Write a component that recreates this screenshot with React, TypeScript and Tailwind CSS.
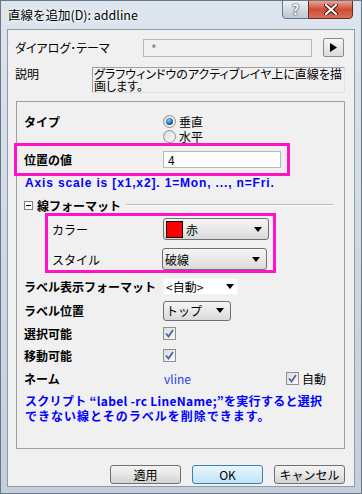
import type { ReactNode } from 'react'

// small helpers drawn in the Windows 7 look of the dialog

function Arrow() {
  return (
    <svg width="8" height="5" viewBox="0 0 8 5" className="shrink-0">
      <path d="M0 0H8L4 5Z" fill="#000" />
    </svg>
  )
}

function Check({ checked = true }: { checked?: boolean }) {
  return (
    <div className="w-[13px] h-[13px] shrink-0 border border-[#8f8f8f] bg-gradient-to-br from-[#dcdcdc] to-[#fbfbfb] flex items-center justify-center">
      {checked && (
        <svg width="11" height="11" viewBox="0 0 11 11">
          <path d="M2 5.5L4.5 8.5L9 2" fill="none" stroke="#4a64a6" strokeWidth="1.8" />
        </svg>
      )}
    </div>
  )
}

function Radio({ checked }: { checked?: boolean }) {
  return (
    <div className="w-[13px] h-[13px] shrink-0 rounded-full border border-[#8f8f8f] bg-gradient-to-br from-[#dcdcdc] to-[#fbfbfb] flex items-center justify-center">
      {checked && <div className="w-[7px] h-[7px] rounded-full bg-[radial-gradient(circle_at_40%_35%,#8fd0ff,#1b5fa8_60%,#0d2f66)]" />}
    </div>
  )
}

function Combo({ w, h, children }: { w: string; h: string; children: ReactNode }) {
  return (
    <div className={`${w} ${h} rounded-[3px] border border-[#707070] bg-gradient-to-b from-[#f4f4f4] via-[#e9e9e9] to-[#d9d9d9] flex items-center pl-[2px] pr-[6px]`}>
      <div className="flex-1 flex items-center gap-[3px]">{children}</div>
      <Arrow />
    </div>
  )
}

function Row({ label, bold = true, h = 'h-[21px]', mt, children }: { label: string; bold?: boolean; h?: string; mt: string; children?: ReactNode }) {
  return (
    <div className={`${h} ${mt} flex items-center pl-[7px]`}>
      <div className={`w-[139px] shrink-0 ${bold ? 'font-bold' : ''}`}>{label}</div>
      {children}
    </div>
  )
}

function Btn({ children, primary }: { children: ReactNode; primary?: boolean }) {
  return (
    <div
      className={`w-[71px] h-[19px] rounded-[3px] border flex items-center justify-center leading-none ${
        primary
          ? 'border-[#3c7fb1] bg-gradient-to-b from-[#eaf6fd] to-[#bde3f8]'
          : 'border-[#707070] bg-gradient-to-b from-[#f4f4f4] via-[#e6e6e6] to-[#d2d2d2]'
      }`}
    >
      {children}
    </div>
  )
}

export default function App() {
  return (
    <div className="w-[362px] h-[494px] flex flex-col overflow-hidden border border-[#6c7785] bg-gradient-to-b from-[#dde5ee] via-[#cfd9e4] to-[#c4cfdb] font-['Noto_Sans_CJK_JP',sans-serif] text-[12px] leading-[15px] text-black">
      {/* Title bar */}
      <div className="h-[28px] shrink-0 flex items-start justify-between">
        <div className="pl-[7px] pt-[6px] text-[12.5px] leading-[16px] [text-shadow:0_0_6px_#fff,0_0_3px_#fff]">直線を追加(D): addline</div>
        <div className="flex mr-[8px] -mt-[1px]">
          <div className="w-[27px] h-[19px] rounded-bl-[4px] border border-[#68778a] bg-gradient-to-b from-[#eef2f6] via-[#d3dbe4] to-[#bcc7d3] flex items-center justify-center text-white font-bold text-[14px] [text-shadow:0_0_1px_#333,0_0_2px_#333]">?</div>
          <div className="w-[45px] h-[19px] -ml-[1px] rounded-br-[4px] border border-[#6b2a22] bg-gradient-to-b from-[#e9a493] via-[#cf4a35] to-[#d8705c] flex items-center justify-center">
            <svg width="14" height="11" viewBox="0 0 14 11">
              <path d="M2 1L12 10M12 1L2 10" stroke="#3a1410" strokeWidth="4" strokeLinecap="round" />
              <path d="M2 1L12 10M12 1L2 10" stroke="#fff" strokeWidth="2.2" strokeLinecap="round" />
            </svg>
          </div>
        </div>
      </div>

      {/* Client area */}
      <div className="flex-1 mx-[6px] border border-[#8d9aa8] bg-[#f0f0f0] flex flex-col">
        {/* Dialog theme */}
        <div className="mt-[8px] h-[19px] flex items-center pl-[7px]">
          <div className="w-[128px] shrink-0 [font-feature-settings:'palt']">ダイアログ･テーマ</div>
          <div className="w-[169px] h-[18px] mt-[1px] border border-[#b5b8be] bg-[#f0f0f0] pl-[7px] flex items-center text-[#7a7a7a]">*</div>
          <div className="ml-[11px] w-[21px] h-[19px] border border-[#8a8a8a] rounded-[2px] bg-gradient-to-b from-[#f6f6f6] to-[#dcdcdc] flex items-center justify-center">
            <svg width="7" height="9" viewBox="0 0 7 9">
              <path d="M0 0L7 4.5L0 9Z" fill="#000" />
            </svg>
          </div>
        </div>

        {/* Description */}
        <div className="mt-[10px] flex items-start pl-[7px]">
          <div className="w-[77px] shrink-0 leading-[13px]">説明</div>
          <div className="w-[253px] h-[26px] border border-t-[#a0a0a0] border-l-[#a0a0a0] border-r-[#e0e0e0] border-b-[#e0e0e0] pl-[1px] leading-[12px] [font-feature-settings:'palt']">
            <div className="whitespace-nowrap">グラフウィンドウのアクティブレイヤ上に直線を描</div>
            <div>画します。</div>
          </div>
        </div>

        {/* Settings panel */}
        <div className="mt-[8px] ml-[8px] w-[329px] h-[348px] border border-[#a0a0a0] flex flex-col">
          <div className="h-[41px] pt-[12px] overflow-hidden flex pl-[7px]">
            <div className="w-[139px] shrink-0 font-bold">タイプ</div>
            <div className="flex flex-col">
              <div className="h-[15px] flex items-center gap-[3px]">
                <Radio checked />
                <span>垂直</span>
              </div>
              <div className="h-[15px] flex items-center gap-[3px]">
                <Radio />
                <span>水平</span>
              </div>
            </div>
          </div>

          {/* highlighted: position */}
          <div className="-ml-[3px] w-[276px] h-[33px] shrink-0 border-[3px] border-[#ff12c8] flex items-center pl-[7px]">
            <div className="w-[139px] shrink-0 font-bold">位置の値</div>
            <div className="w-[118px] h-[17px] border border-[#b5b8be] bg-white pl-[4px] flex items-center">4</div>
          </div>

          <div className="h-[15px] pl-[8px] font-bold text-[#0000ff] font-['Liberation_Sans',sans-serif] tracking-[0.85px]">
            Axis scale is [x1,x2]. 1=Mon, ..., n=Fri.
          </div>

          {/* line format group */}
          <div className="mt-[6px] h-[16px] flex items-center pl-[7px] pr-[11px]">
            <div className="w-[9px] h-[9px] border border-[#808080] bg-white flex items-center justify-center">
              <div className="w-[5px] h-px bg-black" />
            </div>
            <span className="ml-[4px] font-bold">線フォーマット</span>
            <div className="flex-1 ml-[5px] border-t border-[#b9b9b9] border-b-white border-b" />
          </div>

          <div className="ml-[28px] w-[231px] h-[60px] shrink-0 border-[3px] border-[#ff12c8] flex flex-col pt-[2px] gap-[8px]">
            <div className="h-[22px] flex items-center pl-[4px]">
              <div className="w-[111px] shrink-0">カラー</div>
              <Combo w="w-[106px]" h="h-[22px]">
                <div className="w-[17px] h-[17px] border border-black bg-[#ff0000]" />
                <span>赤</span>
              </Combo>
            </div>
            <div className="h-[22px] flex items-center pl-[4px]">
              <div className="w-[110px] shrink-0">スタイル</div>
              <Combo w="w-[105px]" h="h-[22px]">
                <span>破線</span>
              </Combo>
            </div>
          </div>

          <Row label="ラベル表示フォーマット" h="h-[20px]" mt="mt-[3px]">
            <div className="w-[75px] h-[17px] bg-white border border-[#f4f4f4] flex items-center pl-[2px] pr-[3px]">
              <span className="flex-1">&lt;自動&gt;</span>
              <Arrow />
            </div>
          </Row>
          <Row label="ラベル位置" mt="mt-[4px]">
            <Combo w="w-[68px]" h="h-[20px]">
              <span>トップ</span>
            </Combo>
          </Row>
          <Row label="選択可能" mt="mt-[2px]">
            <Check />
          </Row>
          <Row label="移動可能" mt="mt-[1px]">
            <Check />
          </Row>
          <Row label="ネーム" mt="mt-[2px]">
            <span className="w-[123px] pl-[1px] text-[#1f3ff0]">vline</span>
            <Check />
            <span className="ml-[3px]">自動</span>
          </Row>

          <div className="mt-[4px] pl-[8px] font-bold text-[#0000ff] leading-[15px]">
            <div className="tracking-[0.3px] whitespace-nowrap">スクリプト “label -rc LineName;”を実行すると選択</div>
            <div className="tracking-[1px] whitespace-nowrap">できない線とそのラベルを削除できます。</div>
          </div>
        </div>

        {/* Buttons */}
        <div className="mt-[16px] flex justify-end gap-[11px] pr-[9px]">
          <Btn>適用</Btn>
          <Btn primary>OK</Btn>
          <Btn>キャンセル</Btn>
        </div>
      </div>
      <div className="h-[6px] shrink-0" />
    </div>
  )
}
